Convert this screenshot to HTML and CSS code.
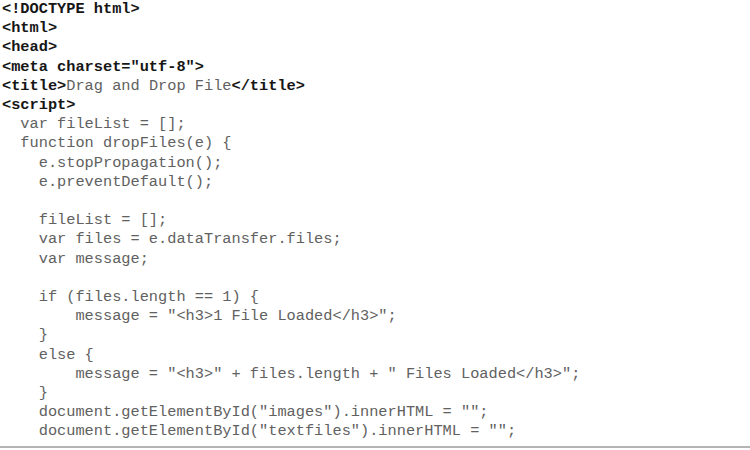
FILE: index.html
```html
<!DOCTYPE html>
<html>
<head>
<meta charset="utf-8">
<title>Listing</title>
<link rel="stylesheet" href="styles.css">
</head>
<body>
<div class="listing">
<pre class="code"><b class="tag">&lt;!DOCTYPE html&gt;</b>
<b class="tag">&lt;html&gt;</b>
<b class="tag">&lt;head&gt;</b>
<b class="tag">&lt;meta charset="utf-8"&gt;</b>
<b class="tag">&lt;title&gt;</b>Drag and Drop File<b class="tag">&lt;/title&gt;</b>
<b class="tag">&lt;script&gt;</b>
  var fileList = [];
  function dropFiles(e) {
    e.stopPropagation();
    e.preventDefault();

    fileList = [];
    var files = e.dataTransfer.files;
    var message;

    if (files.length == 1) {
        message = "&lt;h3&gt;1 File Loaded&lt;/h3&gt;";
    }
    else {
        message = "&lt;h3&gt;" + files.length + " Files Loaded&lt;/h3&gt;";
    }
    document.getElementById("images").innerHTML = "";
    document.getElementById("textfiles").innerHTML = "";</pre>
<div class="rule"></div>
</div>
</body>
</html>
```

FILE: styles.css
```css
html, body {
  margin: 0;
  padding: 0;
  background: #ffffff;
}
.listing {
  width: 750px;
  height: 450px;
  overflow: hidden;
  display: flex;
  flex-direction: column;
}
.code {
  margin: 0;
  padding: 0 0 0 2px;
  font-family: "Liberation Mono", "Courier New", monospace;
  font-size: 15.3px;
  line-height: 19.2px;
  color: #616161;
  white-space: pre;
}
.tag {
  color: #161616;
  font-weight: bold;
}
.rule {
  margin-top: 4px;
  height: 2px;
  background: #b4b4b4;
}
```
